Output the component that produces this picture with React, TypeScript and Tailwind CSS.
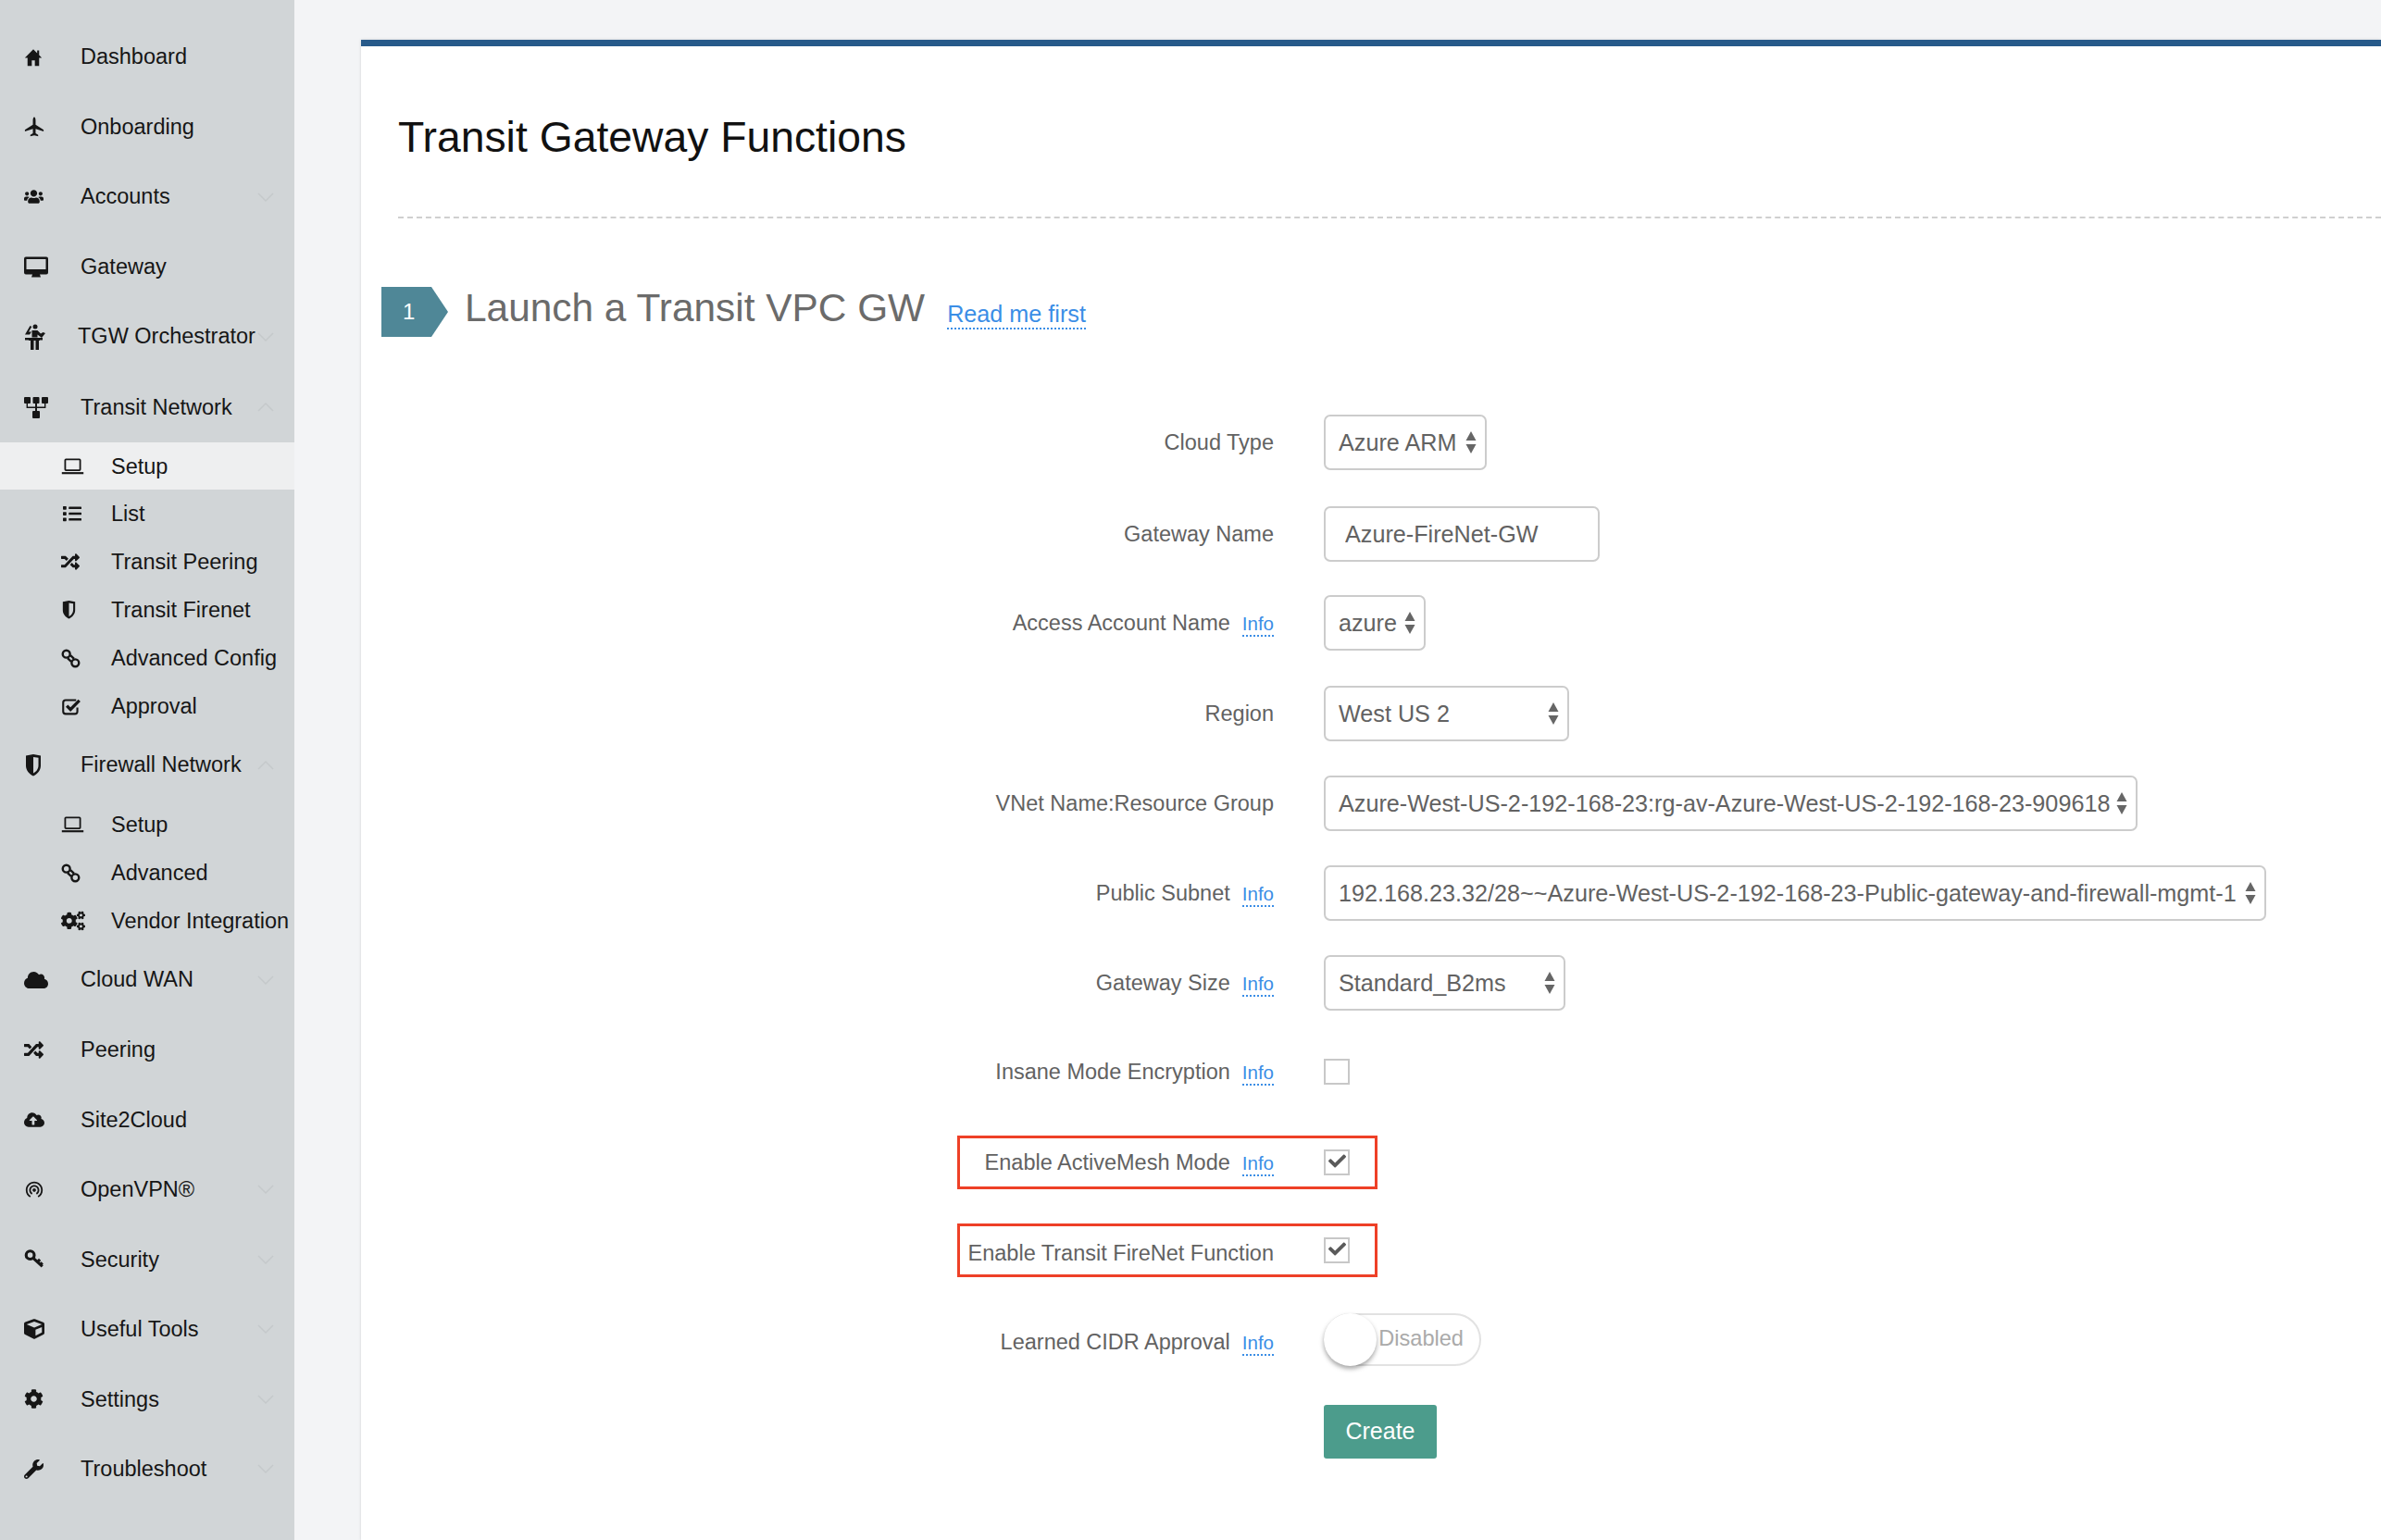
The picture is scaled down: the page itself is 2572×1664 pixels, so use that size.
import type { ReactNode } from "react";
import {
  FaCheck,
  FaCloud,
  FaCloudUploadAlt,
  FaCog,
  FaCogs,
  FaCube,
  FaList,
  FaRandom,
  FaUsers,
  FaWrench,
} from "react-icons/fa";
import { MdWifiTethering } from "react-icons/md";

function HomeIcon({ className }: { className?: string }) {
  return (
    <svg viewBox="0 0 24 24" className={className} fill="currentColor">
      <path d="M12 1.500 1 12.500h3.500V23H10v-7h4v7h5.500V12.500H23l-3.500-3.500V3H17v3.500z" />
    </svg>
  );
}

function PlaneIcon({ className }: { className?: string }) {
  return (
    <svg viewBox="0 0 24 24" className={className} fill="currentColor">
      <path d="M12 0c1 0 1.600 2 1.600 4v5l9.400 6v2l-9.400-3v5l3 2v1.500l-4.600-1-4.600 1V21l3-2v-5L1 17v-2l9.400-6V4c0-2 .6-4 1.600-4z" />
    </svg>
  );
}

function DesktopIcon({ className }: { className?: string }) {
  return (
    <svg viewBox="0 0 26 22" className={className} fill="currentColor">
      <path
        fillRule="evenodd"
        d="M2 0h22a2 2 0 0 1 2 2v15a2 2 0 0 1-2 2h-7l1 3H8l1-3H2a2 2 0 0 1-2-2V2a2 2 0 0 1 2-2zM2.500 2.500v11h21v-11z"
      />
    </svg>
  );
}

function PodiumIcon({ className }: { className?: string }) {
  return (
    <svg viewBox="0 0 24 28" className={className} fill="currentColor">
      <circle cx="12" cy="3" r="2.500" />
      <path d="M1 11.500 6.500 2l1.800 1L5 8.500h3l-2 3z" />
      <path d="M8.500 7h6l3.500 3.500 2.500-1.500 2.500 1-4 5-4.500-3.500v3h-6z" />
      <path d="M1 15h19v2.500h-3V18h-1v10h-3.500V18h-2v10H7V18H5v-.5H1z" />
    </svg>
  );
}

function NetworkIcon({ className }: { className?: string }) {
  return (
    <svg viewBox="0 0 26 24" className={className} fill="currentColor">
      <rect x="0" y="1" width="7" height="7" rx="1" />
      <rect x="9.500" y="1" width="7" height="7" rx="1" />
      <rect x="19" y="1" width="7" height="7" rx="1" />
      <rect x="9" y="16" width="8" height="8" rx="1" />
      <path d="M12 8h2v3.500h8V8h1.400v5H14v3h-2v-3H2.600V8H4v3.500h8z" />
    </svg>
  );
}

function LaptopIcon({ className }: { className?: string }) {
  return (
    <svg viewBox="0 0 26 20" className={className} fill="none" stroke="currentColor">
      <rect x="4" y="1.500" width="18" height="13" rx="1" strokeWidth="2" />
      <path d="M0 18h26" strokeWidth="2.400" />
    </svg>
  );
}

function ChainIcon({ className }: { className?: string }) {
  return (
    <svg viewBox="0 0 24 24" className={className} fill="none" stroke="currentColor" strokeWidth="2.800">
      <circle cx="6.500" cy="6.500" r="4.500" />
      <circle cx="17.500" cy="17.500" r="4.500" />
      <path d="M8 11.500l4.500 4.500M11.500 8l4.500 4.500" />
    </svg>
  );
}

function ShieldIcon({ className }: { className?: string }) {
  return (
    <svg viewBox="0 0 18 24" className={className} fill="currentColor">
      <path
        fillRule="evenodd"
        d="M1 1.500 9 0l8 1.500v11c0 5-4 9-8 11-4-2-8-6-8-11zM9 3v17.500c3-1.500 5.500-4.500 5.500-8.500V3.800z"
      />
    </svg>
  );
}

function CheckSquareIcon({ className }: { className?: string }) {
  return (
    <svg viewBox="0 0 24 24" className={className} fill="none" stroke="currentColor">
      <path d="M19.500 13v5a3 3 0 0 1-3 3H5a3 3 0 0 1-3-3V7a3 3 0 0 1 3-3h13" strokeWidth="2.400" />
      <path d="M6.500 11l4.500 4.500L22 4.500" strokeWidth="3.800" />
    </svg>
  );
}

function KeyIcon({ className }: { className?: string }) {
  return (
    <svg viewBox="0 0 24 24" className={className} fill="none" stroke="currentColor" strokeWidth="3.600">
      <circle cx="7" cy="7" r="5" />
      <path d="M11 11l11 10M16 15.500l3-3M19.500 19l2.500-2.500" />
    </svg>
  );
}

function SelectArrows() {
  return (
    <svg viewBox="0 0 12 24" className="h-[24px] w-[12px] shrink-0 text-[#666666]" fill="currentColor">
      <path d="M6 0l5.500 10H.5z" />
      <path d="M6 24l5.500-10H.5z" />
    </svg>
  );
}

function Chevron({ up }: { up?: boolean }) {
  return (
    <svg
      viewBox="0 0 18 10"
      className={`ml-auto h-[10px] w-[18px] shrink-0 text-[#c5c9cb] ${up ? "rotate-180" : ""}`}
      fill="none"
      stroke="currentColor"
      strokeWidth="1.500"
    >
      <path d="M1 1l8 8 8-8" />
    </svg>
  );
}

type NavItem = {
  label: string;
  icon: ReactNode;
  chevron?: "up" | "down";
  className?: string;
  labelClassName?: string;
};

const topGroup: NavItem[] = [
  { label: "Dashboard", icon: <HomeIcon className="h-[20px] w-[20px]" /> },
  { label: "Onboarding", icon: <PlaneIcon className="h-[23px] w-[22px]" /> },
  { label: "Accounts", icon: <FaUsers className="h-[21px] w-[21px]" />, chevron: "down" },
  { label: "Gateway", icon: <DesktopIcon className="h-[23px] w-[26px]" /> },
  {
    label: "TGW Orchestrator",
    icon: <PodiumIcon className="h-[28px] w-[24px]" />,
    chevron: "down",
    labelClassName: "-ml-[3px]",
  },
];

const transitSub: NavItem[] = [
  { label: "Setup", icon: <LaptopIcon className="h-[18px] w-[25px]" />, className: "h-[51px] bg-[#eeeff0]" },
  { label: "List", icon: <FaList className="h-[20px] w-[24px]" /> },
  { label: "Transit Peering", icon: <FaRandom className="h-[20px] w-[20px]" /> },
  { label: "Transit Firenet", icon: <ShieldIcon className="h-[20px] w-[17px]" /> },
  { label: "Advanced Config", icon: <ChainIcon className="h-[21px] w-[21px]" /> },
  { label: "Approval", icon: <CheckSquareIcon className="h-[21px] w-[22px]" /> },
];

const firewallSub: NavItem[] = [
  { label: "Setup", icon: <LaptopIcon className="h-[18px] w-[25px]" /> },
  { label: "Advanced", icon: <ChainIcon className="h-[21px] w-[21px]" /> },
  { label: "Vendor Integration", icon: <FaCogs className="h-[24px] w-[26px]" /> },
];

const bottomGroup: NavItem[] = [
  { label: "Cloud WAN", icon: <FaCloud className="h-[24px] w-[26px]" />, chevron: "down" },
  { label: "Peering", icon: <FaRandom className="h-[21px] w-[21px]" />, labelClassName: "mt-[1px]" },
  { label: "Site2Cloud", icon: <FaCloudUploadAlt className="h-[22px] w-[22px]" />, labelClassName: "mt-[1px]" },
  { label: "OpenVPN®", icon: <MdWifiTethering className="h-[22px] w-[22px]" />, chevron: "down" },
  { label: "Security", icon: <KeyIcon className="h-[21px] w-[22px]" />, chevron: "down", labelClassName: "mt-[1px]" },
  { label: "Useful Tools", icon: <FaCube className="h-[22px] w-[22px]" />, chevron: "down", labelClassName: "mt-[1px]" },
  { label: "Settings", icon: <FaCog className="h-[21px] w-[21px]" />, chevron: "down", labelClassName: "mt-[1px]" },
  { label: "Troubleshoot", icon: <FaWrench className="h-[21px] w-[21px]" />, chevron: "down", labelClassName: "mt-[1px]" },
];

function TopRow({ item }: { item: NavItem }) {
  return (
    <div className={item.className ?? "flex h-[75.5px] items-center pl-[26px] pr-[22px]"}>
      <span className="flex w-[61px] shrink-0 items-center text-[#161616]">{item.icon}</span>
      <span className={`whitespace-nowrap text-[23.5px] text-[#161616] ${item.labelClassName ?? ""}`}>
        {item.label}
      </span>
      {item.chevron && <Chevron up={item.chevron === "up"} />}
    </div>
  );
}

function SubRow({ item }: { item: NavItem }) {
  return (
    <div className={`flex items-center pl-[66px] ${item.className ?? "h-[52px]"}`}>
      <span className="flex w-[54px] shrink-0 items-center text-[#161616]">{item.icon}</span>
      <span className="mt-[2px] whitespace-nowrap text-[23.5px] text-[#161616]">{item.label}</span>
    </div>
  );
}

function Sidebar() {
  return (
    <aside className="w-[318px] shrink-0 bg-[#d1d5d7] pt-[24px]">
      {topGroup.map((item) => (
        <TopRow key={item.label} item={item} />
      ))}
      <TopRow
        item={{
          label: "Transit Network",
          icon: <NetworkIcon className="h-[24px] w-[26px]" />,
          chevron: "up",
          className: "flex h-[76.5px] items-center pl-[26px] pr-[22px]",
          labelClassName: "mt-[2px]",
        }}
      />
      {transitSub.map((item) => (
        <SubRow key={item.label} item={item} />
      ))}
      <TopRow
        item={{
          label: "Firewall Network",
          icon: <ShieldIcon className="h-[24px] w-[20px]" />,
          chevron: "up",
          className: "flex h-[76px] items-center pl-[26px] pr-[22px]",
        }}
      />
      {firewallSub.map((item) => (
        <SubRow key={item.label} item={item} />
      ))}
      {bottomGroup.map((item) => (
        <TopRow key={item.label} item={item} />
      ))}
    </aside>
  );
}

function InfoLink() {
  return (
    <span className="ml-[13px] mt-[2px] border-b-2 border-dotted border-[#3b8ee6] text-[20.5px] leading-[24px] text-[#3b8ee6]">
      Info
    </span>
  );
}

function Row({
  label,
  info,
  className,
  children,
  highlight,
  labelClassName,
}: {
  label: string;
  info?: boolean;
  className: string;
  children: ReactNode;
  highlight?: boolean;
  labelClassName?: string;
}) {
  return (
    <div className={`relative flex h-[60px] items-center ${className}`}>
      <div
        className={`flex w-[986px] shrink-0 items-center justify-end text-[23.5px] text-[#626262] ${labelClassName ?? "mt-[1px]"}`}
      >
        {label}
        {info && <InfoLink />}
      </div>
      <div className="ml-[54px] flex items-center">{children}</div>
      {highlight && (
        <div className="absolute left-[644px] top-px h-[58px] w-[454px] border-[3px] border-[#ee4027]" />
      )}
    </div>
  );
}

function SelectBox({ value, className }: { value: string; className: string }) {
  return (
    <div
      className={`flex h-[60px] items-center justify-between gap-[6px] rounded-[7px] border-2 border-[#cccccc] pb-[1px] pl-[14px] pr-[9px] text-[25.2px] whitespace-nowrap text-[#626262] ${className}`}
    >
      <span className="mt-[2px]">{value}</span>
      <SelectArrows />
    </div>
  );
}

function CheckBox({ checked }: { checked?: boolean }) {
  return (
    <div className="flex h-[28px] w-[28px] items-center justify-center border-2 border-[#c8c8c8] bg-white">
      {checked && <FaCheck className="mb-[4px] h-[19px] w-[19px] text-[#5a5a5a]" />}
    </div>
  );
}

function Form() {
  return (
    <div className="mt-[84px]">
      <Row label="Cloud Type" className="">
        <SelectBox value="Azure ARM" className="w-[176px]" />
      </Row>
      <Row label="Gateway Name" className="mt-[39px]">
        <input
          readOnly
          defaultValue="Azure-FireNet-GW"
          className="h-[60px] w-[298px] rounded-[7px] border-2 border-[#cccccc] px-[21px] text-[25.2px] text-[#626262] outline-none"
        />
      </Row>
      <Row label="Access Account Name" info className="mt-[36px]">
        <SelectBox value="azure" className="w-[110px]" />
      </Row>
      <Row label="Region" className="mt-[38px]">
        <SelectBox value="West US 2" className="w-[265px]" />
      </Row>
      <Row label="VNet Name:Resource Group" className="mt-[37px]">
        <SelectBox
          value="Azure-West-US-2-192-168-23:rg-av-Azure-West-US-2-192-168-23-909618"
          className="w-[879px]"
        />
      </Row>
      <Row label="Public Subnet" info className="mt-[37px]">
        <SelectBox
          value="192.168.23.32/28~~Azure-West-US-2-192-168-23-Public-gateway-and-firewall-mgmt-1"
          className="w-[1018px]"
        />
      </Row>
      <Row label="Gateway Size" info className="mt-[37px]">
        <SelectBox value="Standard_B2ms" className="w-[261px]" />
      </Row>
      <Row label="Insane Mode Encryption" info className="mt-[36px]">
        <CheckBox />
      </Row>
      <Row label="Enable ActiveMesh Mode" info highlight className="mt-[38px]">
        <CheckBox checked />
      </Row>
      <Row label="Enable Transit FireNet Function" highlight labelClassName="mt-[8px]" className="mt-[35px]">
        <CheckBox checked />
      </Row>
      <Row label="Learned CIDR Approval" info labelClassName="mt-[8px]" className="mt-[36px]">
        <div className="relative flex h-[57px] w-[170px] items-center justify-end rounded-full border-2 border-[#e2e2e2] bg-white pr-[17px] text-[23.6px] text-[#aaaaaa]">
          Disabled
          <span className="absolute -left-[2px] -top-[2px] h-[57px] w-[57px] rounded-full bg-white shadow-[0_3px_5px_rgba(0,0,0,0.35)]" />
        </div>
      </Row>
      <Row label="" className="mt-[40px]">
        <button
          type="button"
          className="h-[58px] w-[122px] rounded-[3px] bg-[#4c9c8c] text-[25px] text-white"
        >
          Create
        </button>
      </Row>
    </div>
  );
}

export default function App() {
  return (
    <div className="flex h-[1664px] w-[2572px] overflow-hidden bg-[#f3f4f6] font-['Liberation_Sans',Arial,sans-serif]">
      <Sidebar />
      <main className="ml-[72px] mt-[43px] flex-1 border-t-[7px] border-[#275a8a] bg-white shadow-[0_0_3px_rgba(0,0,0,0.15)]">
        {/* page title */}
        <div className="ml-[40px] h-[186px] border-b-2 border-dashed border-[#cfcfcf] pt-[68px]">
          <h1 className="text-[46.3px] leading-[60px] text-[#111111]">Transit Gateway Functions</h1>
        </div>

        {/* step heading */}
        <div className="ml-[22px] mt-[74px] flex h-[54px] items-center">
          <div className="flex h-[54px] w-[72px] items-center bg-[#4f8797] pl-[23px] text-[24px] text-white [clip-path:polygon(0_0,75%_0,100%_50%,75%_100%,0_100%)]">
            1
          </div>
          <h2 className="ml-[18px] -mt-[8px] text-[42.4px] leading-[54px] text-[#6b6b6b]">
            Launch a Transit VPC GW
          </h2>
          <a className="ml-[24px] mt-[6px] border-b-2 border-dotted border-[#3b8ee6] text-[25.2px] leading-[30px] text-[#3b8ee6]">
            Read me first
          </a>
        </div>

        <Form />
      </main>
    </div>
  );
}
